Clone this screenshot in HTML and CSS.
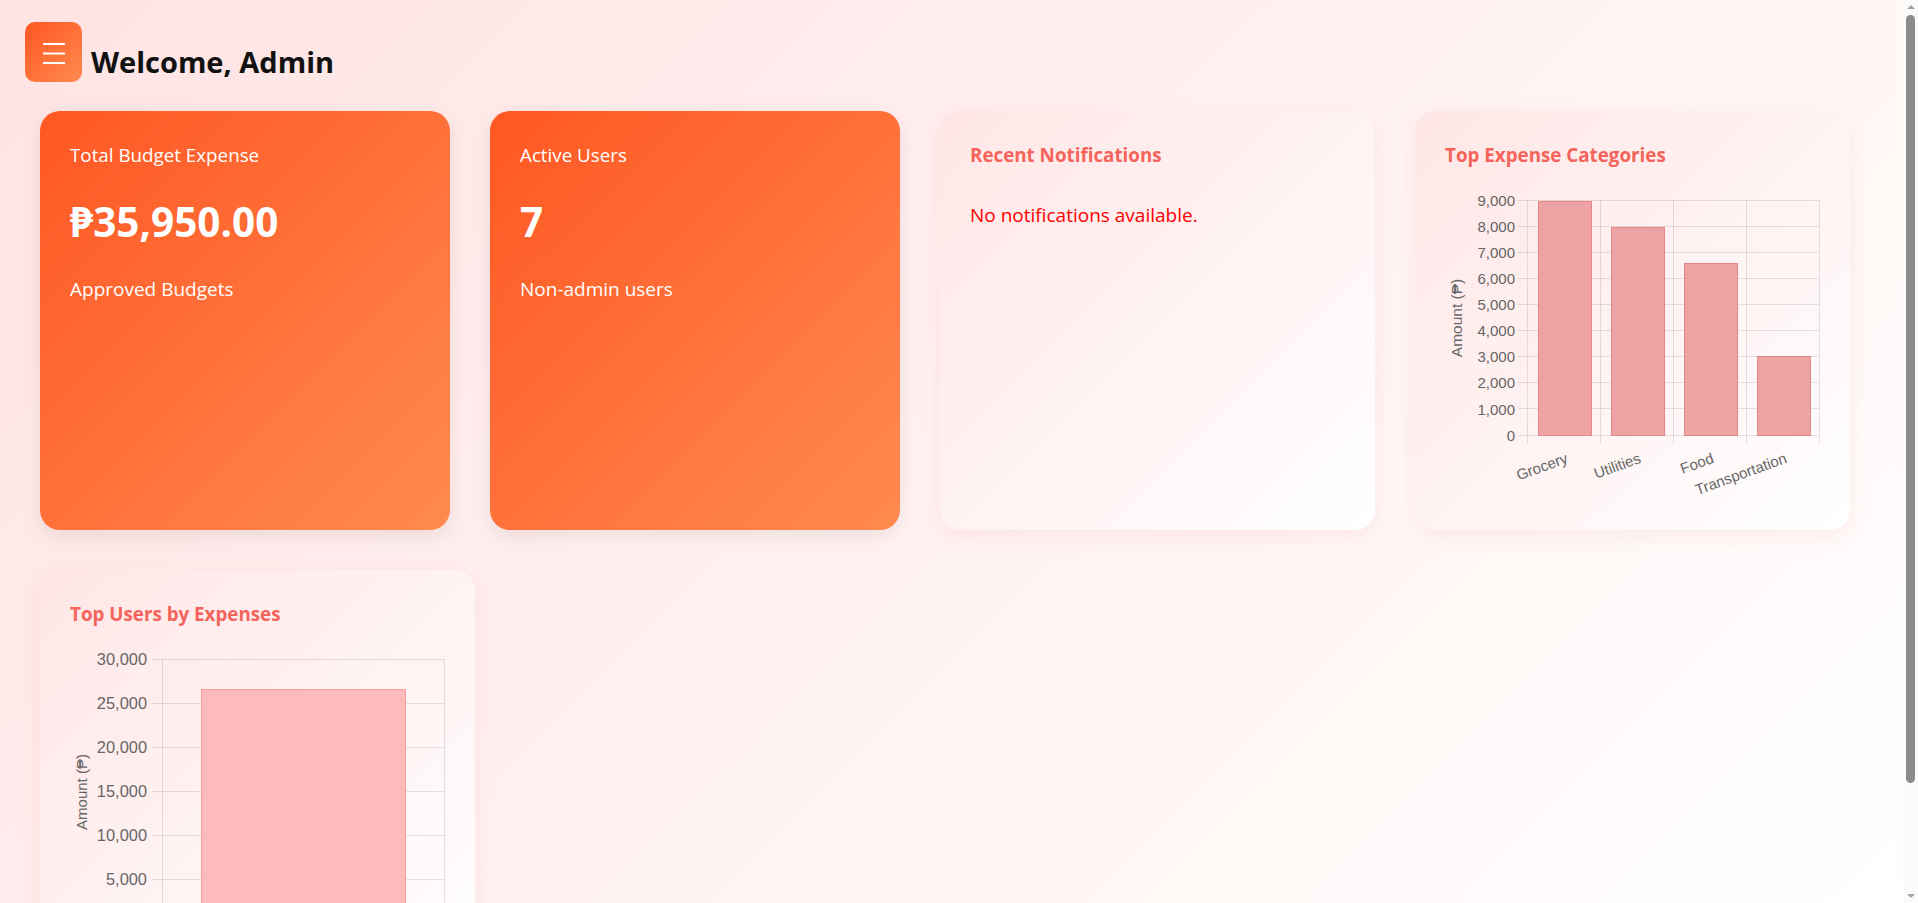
FILE: index.html
```html
<!DOCTYPE html>
<html lang="en">
<head>
<meta charset="utf-8">
<title>Admin Dashboard</title>
<link rel="stylesheet" href="styles.css">
</head>
<body>
<div class="app">
  <div class="main">
    <header class="topbar">
      <button class="menu-btn" aria-label="Menu">
        <svg width="22" height="21" viewBox="0 0 22 21"><path d="M0 1H22M0 10.5H22M0 20H22" stroke="#fff" stroke-width="2"/></svg>
      </button>
      <h1 class="welcome">Welcome, Admin</h1>
    </header>

    <section class="cards">
      <div class="card stat">
        <h3 class="stat-label">Total Budget Expense</h3>
        <div class="stat-value">₱35,950.00</div>
        <p class="stat-sub">Approved Budgets</p>
      </div>
      <div class="card stat">
        <h3 class="stat-label">Active Users</h3>
        <div class="stat-value">7</div>
        <p class="stat-sub">Non-admin users</p>
      </div>
      <div class="card panel">
        <h3 class="panel-title">Recent Notifications</h3>
        <p class="empty">No notifications available.</p>
      </div>
      <div class="card panel">
        <h3 class="panel-title">Top Expense Categories</h3>
        <svg class="chart" width="375" height="300" viewBox="0 0 375 300">
          <g class="grid">
            <path d="M73 12.5H374M73 38.5H374M73 64.5H374M73 90.5H374M73 116.5H374M73 142.5H374M73 168.5H374M73 194.5H374M73 220.5H374M73 247.5H374"/>
            <path d="M82.5 12V256M155.5 12V256M228.5 12V256M301.5 12V256M374.5 12V256"/>
          </g>
          <g class="bars4">
            <rect x="93.5" y="13.5" width="53" height="234"/>
            <rect x="166.5" y="39.5" width="53" height="208"/>
            <rect x="239.5" y="75.5" width="53" height="172"/>
            <rect x="312.5" y="168.5" width="53" height="79"/>
          </g>
          <g class="ticks" text-anchor="end">
            <text x="70" y="17.5">9,000</text>
            <text x="70" y="43.5">8,000</text>
            <text x="70" y="69.5">7,000</text>
            <text x="70" y="95.5">6,000</text>
            <text x="70" y="121.5">5,000</text>
            <text x="70" y="148">4,000</text>
            <text x="70" y="174">3,000</text>
            <text x="70" y="200">2,000</text>
            <text x="70" y="226.5">1,000</text>
            <text x="70" y="252.5">0</text>
          </g>
          <g class="ticks" text-anchor="end">
            <text transform="translate(120,264) rotate(-20)" dy="11">Grocery</text>
            <text transform="translate(193,264) rotate(-20)" dy="11">Utilities</text>
            <text transform="translate(266,264) rotate(-20)" dy="11">Food</text>
            <text transform="translate(339,264) rotate(-20)" dy="11">Transportation</text>
          </g>
          <text class="axis-title" transform="translate(17,130) rotate(-90)" text-anchor="middle">Amount (₱)</text>
        </svg>
      </div>
      <div class="card panel">
        <h3 class="panel-title">Top Users by Expenses</h3>
        <svg class="chart" width="375" height="310" viewBox="0 0 375 310">
          <g class="grid">
            <path d="M82 12.5H374M82 56.5H374M82 100.5H374M82 144.5H374M82 188.5H374M82 232.5H374M82 277.5H374"/>
            <path d="M92.5 12V287M374.5 12V287"/>
          </g>
          <rect class="bar5" x="131.5" y="42.5" width="204" height="235"/>
          <g class="ticks big" text-anchor="end">
            <text x="77" y="18">30,000</text>
            <text x="77" y="62">25,000</text>
            <text x="77" y="106">20,000</text>
            <text x="77" y="150">15,000</text>
            <text x="77" y="194">10,000</text>
            <text x="77" y="238">5,000</text>
            <text x="77" y="283">0</text>
          </g>
          <text class="axis-title big" transform="translate(17,145) rotate(-90)" text-anchor="middle">Amount (₱)</text>
        </svg>
      </div>
    </section>
  </div>
  <div class="scrollbar">
    <span class="sb-arrow up"></span>
    <span class="sb-thumb"></span>
    <span class="sb-space"></span>
    <span class="sb-arrow down"></span>
  </div>
</div>
</body>
</html>
```
FILE: styles.css
```css
* { box-sizing: border-box; }
html, body { margin: 0; padding: 0; height: 100%; }
body {
  font-family: "Open Sans", "Noto Sans", "DejaVu Sans", sans-serif;
  overflow: hidden;
}
.app {
  display: flex;
  height: 100vh;
  background: linear-gradient(135deg, #ffe3e3 0%, #fff3f2 55%, #ffffff 100%);
}
.main {
  flex: 1;
  overflow: hidden;
}
.topbar {
  display: flex;
  align-items: flex-end;
  gap: 9px;
  padding: 22px 0 0 25px;
}
.menu-btn {
  width: 57px;
  height: 60px;
  border: 0;
  border-radius: 10px;
  background: linear-gradient(135deg, #ff5722, #ff8a50);
  display: flex;
  align-items: center;
  justify-content: center;
  padding: 3px 0 0 0;
  cursor: pointer;
}
.menu-btn svg { display: block; }
.welcome {
  margin: 0;
  font-size: 29px;
  font-weight: 700;
  color: #111;
  line-height: 1;
  padding-bottom: 6px;
}
.cards {
  display: flex;
  flex-wrap: wrap;
  gap: 40px;
  padding: 29px 53px 40px 40px;
}
.card {
  height: 419px;
  border-radius: 20px;
  padding: 30px;
  box-shadow: 0 6px 20px rgba(0, 0, 0, 0.08);
  overflow: hidden;
}
.stat {
  width: 410px;
  background: linear-gradient(135deg, #ff5722, #ff8a50);
  color: #fff;
}
.panel {
  width: 435px;
  background: linear-gradient(135deg, #ffe6e6, #ffffff);
  box-shadow: 0 6px 20px rgba(240, 120, 120, 0.12);
}
.stat-label, .panel-title {
  margin: 1px 0 0 0;
  font-size: 18.8px;
  line-height: 27px;
}
.stat-label { font-weight: 400; }
.panel-title {
  font-weight: 700;
  color: #f4645a;
  margin-bottom: 19px;
}
.stat-value {
  margin-top: 29px;
  font-size: 40.5px;
  font-weight: 700;
  line-height: 48px;
}
.stat-sub {
  margin: 30px 0 0 0;
  font-size: 19px;
  line-height: 27px;
}
.empty {
  margin: 33px 0 0 0;
  color: #ff0000;
  font-size: 19px;
  line-height: 27px;
}
.chart { display: block; overflow: visible; }
.grid path { stroke: rgba(0, 0, 0, 0.1); stroke-width: 1; fill: none; }
.bars4 rect { fill: #eda3a3; stroke: #e68686; stroke-width: 1; }
.bar5 { fill: #ffbbbb; stroke: #ff9c9c; stroke-width: 1; }
.ticks text {
  font-family: "Liberation Sans", Arial, "DejaVu Sans", sans-serif;
  font-size: 15px;
  fill: #666;
}
.ticks.big text { font-size: 16.4px; }
.axis-title {
  font-family: "Liberation Sans", Arial, "DejaVu Sans", sans-serif;
  font-size: 15.5px;
  fill: #666;
}
.axis-title.big { font-size: 15px; }
.scrollbar {
  width: 15px;
  flex: 0 0 15px;
  background: #fbfbfb;
  display: flex;
  flex-direction: column;
  align-items: center;
}
.sb-arrow {
  width: 0;
  height: 0;
  border-left: 4px solid transparent;
  border-right: 4px solid transparent;
  flex: 0 0 auto;
}
.sb-arrow.up { border-bottom: 4px solid #a3a3a3; margin-top: 5px; }
.sb-arrow.down { border-top: 4px solid #a3a3a3; margin-bottom: 5px; }
.sb-thumb {
  width: 9px;
  flex: 0 0 768px;
  margin-top: 6px;
  border-radius: 5px;
  background: #8b8b8b;
}
.sb-space { flex: 1; }
```
